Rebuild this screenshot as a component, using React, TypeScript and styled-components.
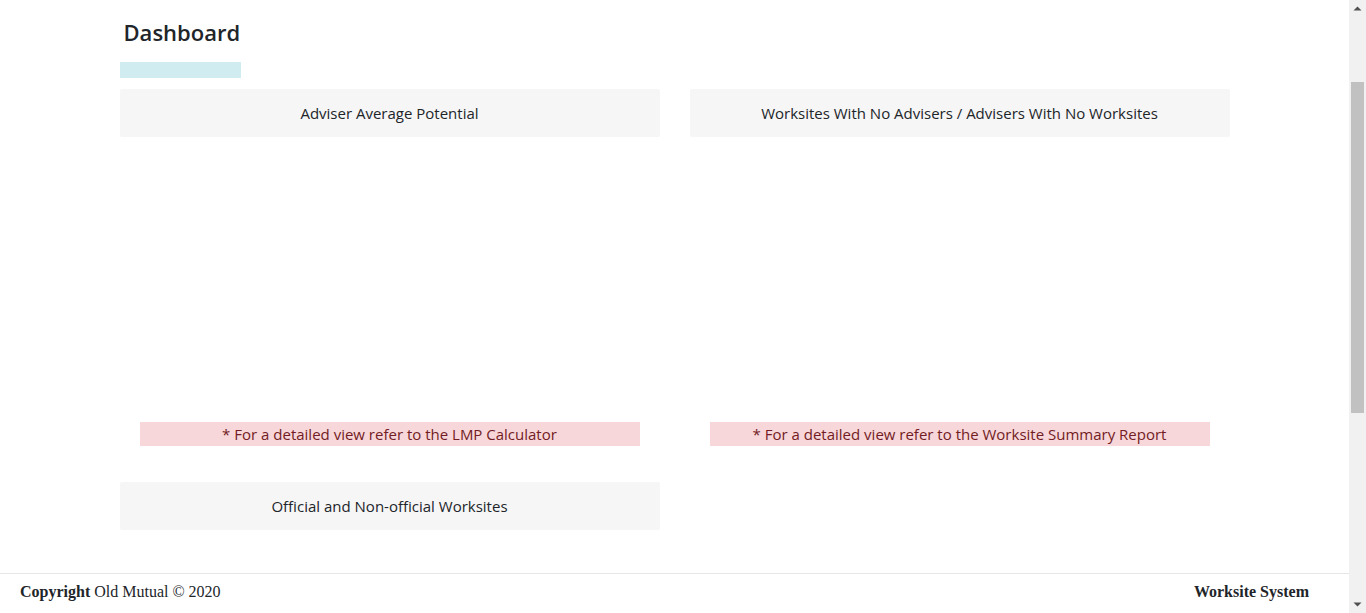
import styled, { createGlobalStyle } from "styled-components";

const GlobalStyle = createGlobalStyle`
  body {
    margin: 0;
    overflow: hidden;
    font-family: "Open Sans", "Noto Sans", sans-serif;
    color: #212529;
    background: #fff;
  }
`;

type Widget = {
  title: string;
  note?: string;
};

const widgets: Widget[] = [
  {
    title: "Adviser Average Potential",
    note: "* For a detailed view refer to the LMP Calculator",
  },
  {
    title: "Worksites With No Advisers / Advisers With No Worksites",
    note: "* For a detailed view refer to the Worksite Summary Report",
  },
  { title: "Official and Non-official Worksites" },
];

const App = () => {
  return (
    <>
      <GlobalStyle />
      <Page>
        <Container>
          <Title>Dashboard</Title>
          <TitleBar />
          <Grid>
            {widgets.map((w) => (
              <Column key={w.title}>
                <CardHeader>{w.title}</CardHeader>
                {w.note ? (
                  <>
                    <ChartArea />
                    <Note>{w.note}</Note>
                  </>
                ) : null}
              </Column>
            ))}
          </Grid>
        </Container>
      </Page>
      <Footer>
        <span>
          <b>Copyright</b> Old Mutual © 2020
        </span>
        <b>Worksite System</b>
      </Footer>
      <ScrollBar>
        <ScrollArrow>
          <svg width="17" height="17" viewBox="0 0 17 17">
            <path d="M4.5 10.5 L8.5 6.5 L12.5 10.5 Z" fill="#505050" />
          </svg>
        </ScrollArrow>
        <ScrollTrack>
          <ScrollThumb />
        </ScrollTrack>
        <ScrollArrow>
          <svg width="17" height="17" viewBox="0 0 17 17">
            <path d="M4.5 6.5 L8.5 10.5 L12.5 6.5 Z" fill="#505050" />
          </svg>
        </ScrollArrow>
      </ScrollBar>
    </>
  );
};

export default App;

const Page = styled.div`
  width: calc(100% - 17px);
`;
const Container = styled.div`
  width: 1110px;
  margin: 0 auto;
  display: flex;
  flex-direction: column;
`;
const Title = styled.h1`
  margin: 16px 0 0 4px;
  font-size: 22px;
  font-weight: 600;
  line-height: 32px;
  color: #212529;
`;
const TitleBar = styled.div`
  width: 121px;
  height: 16px;
  margin-top: 14px;
  background: #d1ecf1;
`;
const Grid = styled.div`
  display: grid;
  grid-template-columns: 540px 540px;
  column-gap: 30px;
  row-gap: 36px;
  margin-top: 11px;
`;
const Column = styled.div`
  display: flex;
  flex-direction: column;
  align-items: center;
`;
const CardHeader = styled.div`
  width: 100%;
  height: 48px;
  display: flex;
  align-items: center;
  justify-content: center;
  background: #f6f6f6;
  border-radius: 2px;
  font-size: 15px;
  color: #212529;
`;
const ChartArea = styled.div`
  height: 285px;
`;
const Note = styled.div`
  width: 500px;
  height: 24px;
  display: flex;
  align-items: center;
  justify-content: center;
  background: #f8d7da;
  color: #721c24;
  font-size: 15px;
`;
const Footer = styled.footer`
  position: fixed;
  left: 0;
  right: 17px;
  bottom: 0;
  height: 40px;
  box-sizing: border-box;
  padding: 0 40px 3px 20px;
  border-top: 1px solid #e6e6e6;
  background: #fff;
  display: flex;
  align-items: center;
  justify-content: space-between;
  font-family: "Liberation Serif", "Times New Roman", serif;
  font-size: 16px;
  color: #212529;
`;
const ScrollBar = styled.div`
  position: fixed;
  top: 0;
  right: 0;
  bottom: 0;
  width: 17px;
  background: #f1f1f1;
  display: flex;
  flex-direction: column;
`;
const ScrollArrow = styled.div`
  height: 17px;
  flex: none;
  svg {
    display: block;
  }
`;
const ScrollTrack = styled.div`
  flex: 1;
  padding-top: 65px;
`;
const ScrollThumb = styled.div`
  height: 331px;
  margin: 0 2px;
  background: #c1c1c1;
`;
